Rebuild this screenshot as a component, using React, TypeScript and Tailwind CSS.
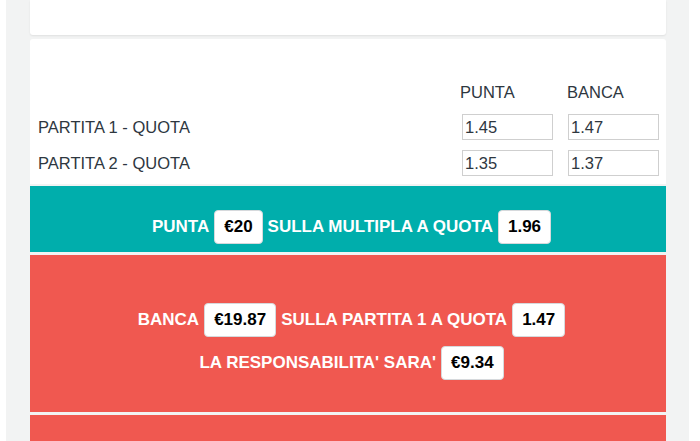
const font = { fontFamily: '"Liberation Sans", Arial, sans-serif' };

function Badge({ children }: { children: React.ReactNode }) {
  return (
    <span className="inline-flex h-[34px] items-center rounded-[4px] border border-[#d6d9dc] bg-white px-[9px] text-[17px] font-bold text-black">
      {children}
    </span>
  );
}

function OddsInput({ value }: { value: string }) {
  return (
    <div className="flex h-[26px] items-center border border-[#cfcfcf] bg-white pl-[2px] text-[16.5px] text-[#2e373f]">
      {value}
    </div>
  );
}

const rows = [
  { label: "PARTITA 1 - QUOTA", punta: "1.45", banca: "1.47" },
  { label: "PARTITA 2 - QUOTA", punta: "1.35", banca: "1.37" },
];

export default function App() {
  return (
    <div className="h-[441px] w-[700px] overflow-hidden bg-white" style={font}>
      <div className="ml-[6px] h-full w-[683px] bg-[#f2f3f3] pl-[24px] pr-[23px]">
        <div className="h-[35px] rounded-b-[3px] bg-white shadow-[0_1px_2px_rgba(0,0,0,0.08)]" />

        <div className="mt-[4px] rounded-t-[3px] bg-white pb-[8px] pl-[8px] pr-[7px] pt-[43px] text-[16.5px] text-[#2e373f]">
          <div className="grid grid-cols-[1fr_91px_91px] gap-x-[15px]">
            <div />
            <div className="-ml-[2px] h-[20px] leading-[20px]">PUNTA</div>
            <div className="-ml-[1px] h-[20px] leading-[20px]">BANCA</div>
          </div>
          <div className="mt-[12px] flex flex-col gap-[10px]">
            {rows.map((r) => (
              <div key={r.label} className="grid grid-cols-[1fr_91px_91px] items-center gap-x-[15px]">
                <div className="leading-[26px]">{r.label}</div>
                <OddsInput value={r.punta} />
                <OddsInput value={r.banca} />
              </div>
            ))}
          </div>
        </div>

        <div className="mt-[2px] flex h-[66px] items-start justify-center gap-[5px] bg-[#00aeac] pl-[7px] pt-[24px] text-[17px] font-bold text-white">
          <span className="leading-[34px]">PUNTA</span>
          <Badge>€20</Badge>
          <span className="leading-[34px]">SULLA MULTIPLA A QUOTA</span>
          <Badge>1.96</Badge>
        </div>

        <div className="mt-[3px] flex h-[157px] flex-col items-center gap-[9px] bg-[#f05850] pl-[7px] pt-[48px] text-[17px] font-bold text-white">
          <div className="flex items-center gap-[5px]">
            <span>BANCA</span>
            <Badge>€19.87</Badge>
            <span>SULLA PARTITA 1 A QUOTA</span>
            <Badge>1.47</Badge>
          </div>
          <div className="flex items-center gap-[5px]">
            <span>LA RESPONSABILITA' SARA'</span>
            <Badge>€9.34</Badge>
          </div>
        </div>

        <div className="mt-[3px] h-[40px] bg-[#f05850]" />
      </div>
    </div>
  );
}
